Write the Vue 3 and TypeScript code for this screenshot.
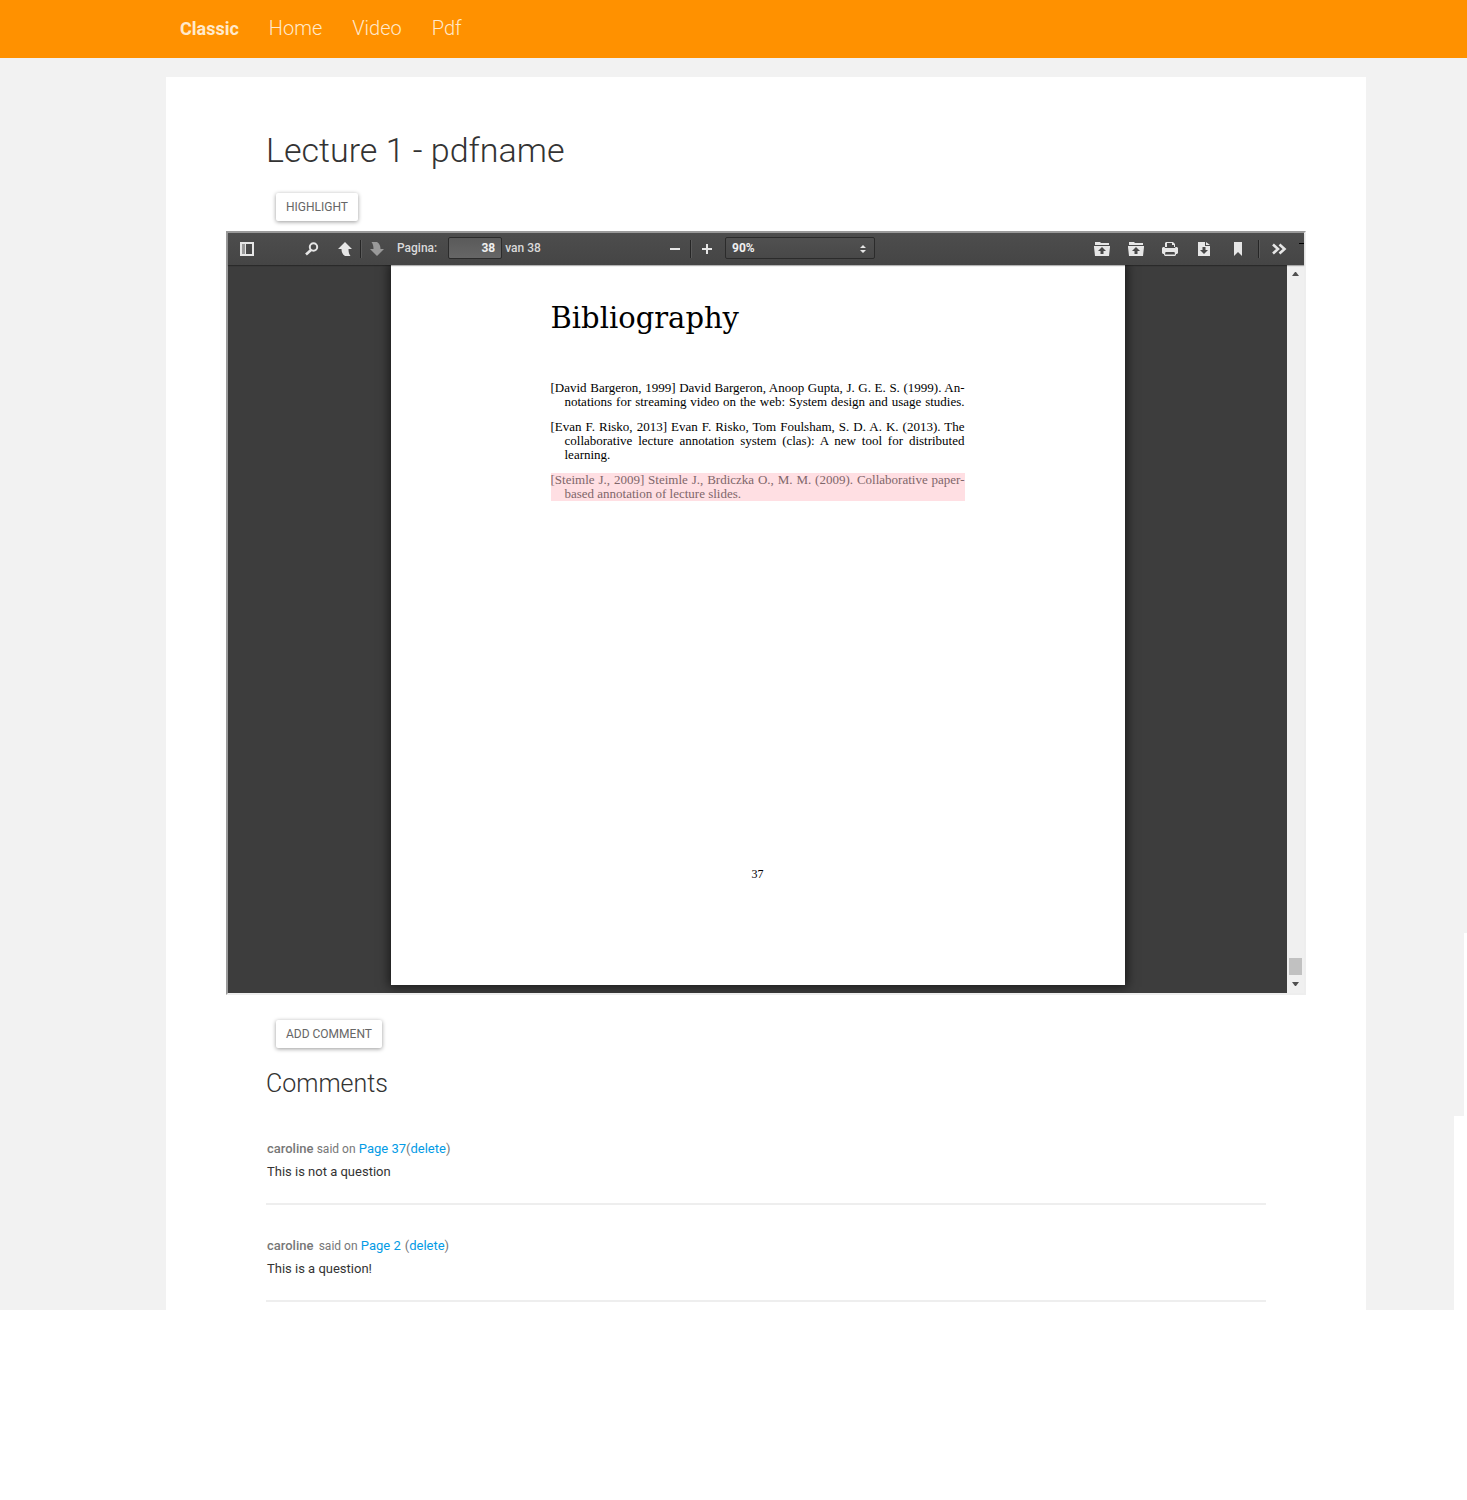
<script setup lang="ts">
import { ref } from 'vue'

interface Comment {
  author: string
  place: string
  text: string
  spaced: boolean
}

interface Line {
  text: string
  fill: boolean
}

const page = ref('38')
const zoomLevel = ref('90%')

const links: string[] = ['Home', 'Video', 'Pdf']

const entries: { marked: boolean; lines: Line[] }[] = [
  {
    marked: false,
    lines: [
      { text: '[David Bargeron, 1999] David Bargeron, Anoop Gupta, J. G. E. S. (1999). An-', fill: true },
      { text: 'notations for streaming video on the web: System design and usage studies.', fill: true },
    ],
  },
  {
    marked: false,
    lines: [
      { text: '[Evan F. Risko, 2013] Evan F. Risko, Tom Foulsham, S. D. A. K. (2013). The', fill: true },
      { text: 'collaborative lecture annotation system (clas): A new tool for distributed', fill: true },
      { text: 'learning.', fill: false },
    ],
  },
  {
    marked: true,
    lines: [
      { text: '[Steimle J., 2009] Steimle J., Brdiczka O., M. M. (2009). Collaborative paper-', fill: true },
      { text: 'based annotation of lecture slides.', fill: false },
    ],
  },
]

const comments: Comment[] = [
  { author: 'caroline', place: 'Page 37', text: 'This is not a question', spaced: false },
  { author: 'caroline', place: 'Page 2', text: 'This is a question!', spaced: true },
]
</script>

<template>
  <div class="site">
    <nav class="navbar">
      <a class="brand" href="#">Classic</a>
      <a v-for="link in links" :key="link" class="nav-link" href="#">{{ link }}</a>
    </nav>

    <main class="card">
      <h1>Lecture 1 - pdfname</h1>
      <button class="raised" type="button">HIGHLIGHT</button>

      <section class="viewer">
        <div class="toolbar">
          <div class="group left">
            <button class="tool" type="button" aria-label="Sidebar">
              <svg width="16" height="16" viewBox="0 0 16 16">
                <path fill="#e6e6e6" fill-rule="evenodd" d="M1 1h14v14H1zM3 3v10h3V3zM7 3v10h6V3z" />
                <path fill="#999" d="M3 3h3v10H3z" />
              </svg>
            </button>
            <button class="tool search" type="button" aria-label="Search">
              <svg width="16" height="16" viewBox="0 0 16 16">
                <circle cx="9.500" cy="6" r="3.700" fill="none" stroke="#e6e6e6" stroke-width="2" />
                <path d="M7 9 2 13.500" stroke="#e6e6e6" stroke-width="2.600" />
              </svg>
            </button>
            <button class="tool" type="button" aria-label="Previous page">
              <svg width="16" height="16" viewBox="0 0 16 16">
                <path fill="#e6e6e6" d="M8 1 15 8h-3.500c0 3 .5 5 2 7H8c-2.500-1.500-3.500-4-3.500-7H1z" />
              </svg>
            </button>
            <span class="divider"></span>
            <button class="tool" type="button" aria-label="Next page">
              <svg width="16" height="16" viewBox="0 0 16 16">
                <path fill="#999" d="M8 15 15 8h-3.500c0-3-1-5.500-3.500-7H2.500c1.500 2 2 4 2 7H1z" />
              </svg>
            </button>
            <label class="page-label" for="page">Pagina:</label>
            <input id="page" v-model="page" class="page-input" type="text" />
            <span class="page-total">van 38</span>
          </div>

          <div class="group middle">
            <button class="tool" type="button" aria-label="Zoom out">
              <svg width="16" height="16" viewBox="0 0 16 16"><path fill="#e6e6e6" d="M3 7h10v2H3z" /></svg>
            </button>
            <span class="divider"></span>
            <button class="tool" type="button" aria-label="Zoom in">
              <svg width="16" height="16" viewBox="0 0 16 16"><path fill="#e6e6e6" d="M3 7h4V3h2v4h4v2H9v4H7V9H3z" /></svg>
            </button>
            <span class="zoom">
              <select v-model="zoomLevel" aria-label="Zoom level">
                <option>90%</option>
                <option>100%</option>
              </select>
              <svg class="arrows" width="6" height="8" viewBox="0 0 6 8">
                <path fill="#e6e6e6" d="M3 0l3 3H0zM0 5h6L3 8z" />
              </svg>
            </span>
          </div>

          <div class="group right">
            <button v-for="n in 2" :key="n" class="tool" type="button" aria-label="Open file">
              <svg width="16" height="16" viewBox="0 0 16 16">
                <path fill="#e6e6e6" fill-rule="evenodd" d="M1 1h5l1 1h8v2H1zM0 5h16v1l-1 9H1L0 6zM8 6 4 10h2.500v3h3v-3H12z" />
              </svg>
            </button>
            <button class="tool" type="button" aria-label="Print">
              <svg width="16" height="16" viewBox="0 0 16 16">
                <path fill="#e6e6e6" fill-rule="evenodd" d="M4 1h7l2 2v3h-1V4h-2V2H5v4H3V2zM3 7h10l.5-1H15l1 1v5l-1 1h-1v1l-1 1H3l-1-1v-1H1l-1-1V7l1-1h1.500zM3.500 11 3 13.500h10l-.5-2.500z" />
              </svg>
            </button>
            <button class="tool" type="button" aria-label="Download">
              <svg width="16" height="16" viewBox="0 0 16 16">
                <path fill="#e6e6e6" fill-rule="evenodd" d="M2 1h7v4h5v10H2zM6.500 6v3H4l4 4 4-4H9.500V6z" />
                <path fill="#e6e6e6" d="m10 1 4 3h-4z" />
              </svg>
            </button>
            <button class="tool" type="button" aria-label="Bookmark">
              <svg width="16" height="16" viewBox="0 0 16 16"><path fill="#e6e6e6" d="M4 1h8v14l-4-4-4 4z" /></svg>
            </button>
            <span class="divider"></span>
            <button class="tool" type="button" aria-label="More tools">
              <svg width="16" height="16" viewBox="0 0 16 16">
                <path fill="none" stroke="#e6e6e6" stroke-width="2.600" d="m2 3.500 5 4.500-5 4.500M8.500 3.500l5 4.500-5 4.500" />
              </svg>
            </button>
          </div>
        </div>

        <div class="stage">
          <div class="canvas">
            <article class="sheet">
              <h2>Bibliography</h2>
              <p v-for="(entry, i) in entries" :key="i" :class="{ marked: entry.marked }">
                <span v-for="line in entry.lines" :key="line.text" :class="{ fill: line.fill }">{{ line.text }}</span>
              </p>
              <footer>37</footer>
            </article>
          </div>
          <div class="scrollbar">
            <svg width="7" height="4" viewBox="0 0 7 4"><path fill="#505050" d="M3 0h1l3 4H0z" /></svg>
            <span class="thumb"></span>
            <svg width="7" height="4" viewBox="0 0 7 4"><path fill="#505050" d="M0 0h7L4 4H3z" /></svg>
          </div>
        </div>
      </section>

      <button class="raised" type="button">ADD COMMENT</button>
      <h3>Comments</h3>
      <article v-for="comment in comments" :key="comment.place" class="comment" :class="{ spaced: comment.spaced }">
        <p class="meta">
          <strong>{{ comment.author }}</strong> <span class="said">said on</span> <a class="place" href="#">{{ comment.place }}</a
          ><span class="remove">(<a href="#">delete</a>)</span>
        </p>
        <p class="body">{{ comment.text }}</p>
      </article>
    </main>
    <span class="edge upper"></span>
    <span class="edge lower"></span>
  </div>
</template>

<style>
body {
  margin: 0;
  background: #fff;
}
</style>

<style scoped>
* {
  box-sizing: border-box;
}
.site {
  position: relative;
  background: #f2f2f2;
  font-family: Roboto, sans-serif;
  color: #333;
}
h1, h2, h3, p {
  margin: 0;
  font-weight: 300;
}
a {
  color: #039be5;
  text-decoration: none;
}
.navbar {
  display: flex;
  align-items: center;
  gap: 30px;
  height: 58px;
  padding: 0 180px 2px;
  background: #ff9100;
}
.navbar a {
  color: #ffe9cc;
  font-size: 20px;
  font-weight: 300;
}
.navbar .brand {
  font-size: 18px;
  font-weight: 700;
}
.card {
  margin: 19px 101px 0 166px;
  padding: 52px 60px 8px;
  background: #fff;
}
h1 {
  margin: 0 0 22px 40px;
  font-size: 34px;
  line-height: 42px;
}
.raised {
  display: block;
  height: 28px;
  margin: 20px 0 10px 50px;
  padding: 0 10px;
  border: 0;
  border-radius: 2px;
  background: #fff;
  box-shadow: 0 1px 4px rgba(0, 0, 0, 0.4);
  color: #666;
  font: 12px/28px Roboto, sans-serif;
}
.viewer {
  margin-bottom: 25px;
  border: 2px solid;
  border-color: #9a9a9a #eee #eee #9a9a9a;
}
.toolbar {
  position: relative;
  z-index: 1;
  display: grid;
  grid-template-columns: 1fr auto 1fr;
  align-items: center;
  height: 32px;
  background: linear-gradient(#4d4d4d, #454545);
  box-shadow: 0 1px 1px rgba(0, 0, 0, 0.3);
  color: #d9d9d9;
  font-size: 12px;
  font-weight: 500;
}
.toolbar::after {
  content: "";
  position: absolute;
  top: 10px;
  right: 0;
  width: 5px;
  height: 1px;
  background: #000;
}
.group {
  display: flex;
  align-items: center;
}
.left {
  padding-left: 11px;
}
.middle {
  padding-left: 10px;
}
.right {
  justify-content: flex-end;
  gap: 18px;
  padding-right: 17px;
}
.tool {
  display: flex;
  padding: 0;
  border: 0;
  background: none;
}
.search {
  margin: 0 17px 0 49px;
}
.divider {
  width: 2px;
  height: 18px;
  margin: 0 7px;
  border-left: 1px solid #262626;
  border-right: 1px solid #5a5a5a;
}
.right .divider {
  margin: 0 -7px 0 -6px;
}
.page-label {
  margin: 0 11px 0 12px;
}
.page-label,
.page-total {
  padding-bottom: 2px;
}
.page-input,
select {
  height: 22px;
  border: 1px solid #2b2b2b;
  border-radius: 2px;
  color: #f0f0f0;
  font: 700 12px/20px Roboto, sans-serif;
}
.page-input {
  width: 54px;
  margin-bottom: 2px;
  padding: 0 6px;
  background: linear-gradient(#5a5a5a, #666);
  text-align: right;
}
.page-total {
  margin-left: 3px;
}
.zoom {
  position: relative;
  display: flex;
  margin: 0 0 2px 10px;
}
select {
  width: 150px;
  padding: 0 6px;
  appearance: none;
  background: linear-gradient(#505050, #484848);
}
.arrows {
  position: absolute;
  top: 8px;
  right: 9px;
}
.stage {
  display: flex;
  background: #3d3d3d;
}
.canvas {
  flex: 1;
  padding-bottom: 8px;
  overflow: hidden;
}
.sheet {
  width: 734px;
  margin: 0 auto;
  padding: 34px 160px 104px;
  background: #fff;
  box-shadow: 0 0 10px 2px rgba(0, 0, 0, 0.6);
  color: #000;
  font: 13px/14px "Liberation Serif", serif;
}
h2 {
  margin-bottom: 44px;
  font-family: "DejaVu Serif", serif;
  font-size: 29px;
  font-weight: 400;
  line-height: 38px;
}
.sheet p {
  width: 414px;
  margin-bottom: 11px;
  padding-left: 14px;
  font-weight: 400;
  white-space: nowrap;
}
.sheet p span {
  display: block;
}
.sheet p span:first-child {
  margin-left: -14px;
}
.sheet p .fill {
  text-align-last: justify;
}
.sheet p.marked {
  background: #ffdfe3;
  color: #80666a;
}
.sheet footer {
  padding-top: 355px;
  font-size: 12px;
  text-align: center;
}
.scrollbar {
  display: flex;
  flex-direction: column;
  align-items: center;
  width: 17px;
  padding: 7px 0;
  background: #f0f0f0;
}
.thumb {
  width: 13px;
  height: 17px;
  margin: auto 0 7px;
  background: #c1c1c1;
}
h3 {
  margin: 21px 0 0 40px;
  font-size: 25px;
  line-height: 30px;
}
.comment {
  margin: 0 40px;
  padding: 38px 1px 20px;
  border-bottom: 2px solid #eee;
  font-size: 13px;
}
.comment + .comment {
  padding-top: 29px;
}
.comment p {
  font-weight: 400;
  line-height: 23px;
}
.meta {
  color: #777;
}
.meta strong {
  font-weight: 500;
}
.said {
  font-size: 12px;
  line-height: 12px;
}
.spaced .said {
  margin-left: 2px;
}
.spaced .remove {
  margin-left: 4px;
}
.edge {
  position: absolute;
  right: 0;
  bottom: 0;
  background: #fff;
}
.upper {
  width: 3px;
  height: 377px;
}
.lower {
  width: 13px;
  height: 194px;
}
</style>
